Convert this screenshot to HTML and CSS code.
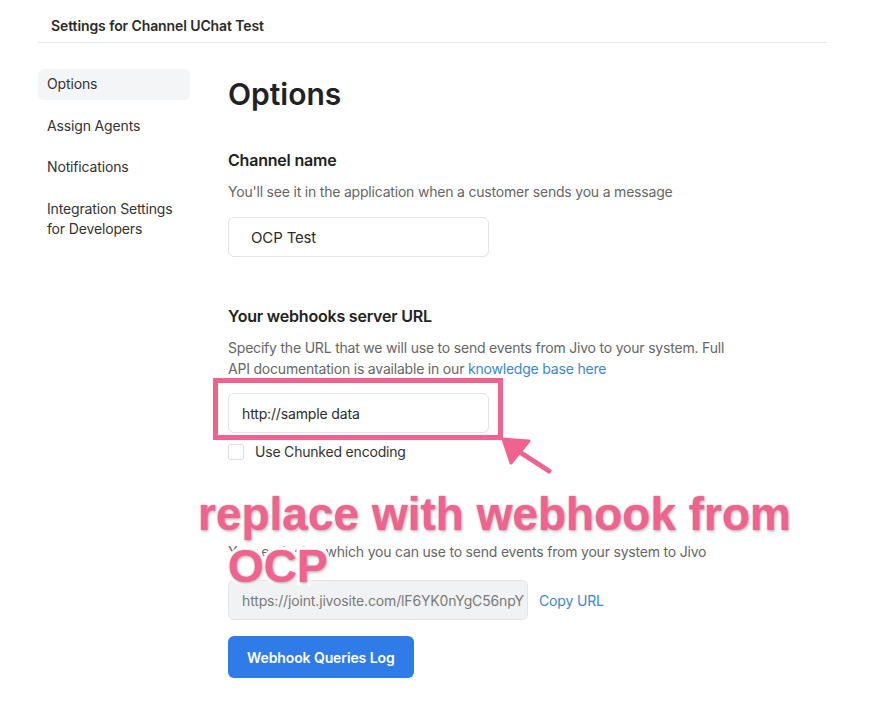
FILE: index.html
```html
<!DOCTYPE html>
<html lang="en">
<head>
    <meta charset="UTF-8" />
    <title>Settings for Channel UChat Test</title>
    <link rel="stylesheet" href="styles.css">
</head>
<body>
    <div class="page">
        <div class="header">Settings for Channel UChat Test</div>

        <div class="layout">
            <ul class="side-nav">
                <li class="active">Options</li>
                <li>Assign Agents</li>
                <li>Notifications</li>
                <li>Integration Settings<br>for Developers</li>
            </ul>

            <div class="main">
                <h1>Options</h1>

                <h2>Channel name</h2>
                <p class="hint">You'll see it in the application when a customer sends you a message</p>
                <input type="text" class="field name-field" value="OCP Test" />

                <h2 class="section">Your webhooks server URL</h2>
                <p class="hint wide">Specify the URL that we will use to send events from Jivo to your system. Full API documentation is available in our <a href="#">knowledge base here</a></p>
                <input type="text" class="field url-field" value="http://sample data" />
                <label class="check"><span class="box"></span>Use Chunked encoding</label>

                <p class="hint endpoint">Your endpoint, which you can use to send events from your system to Jivo</p>
                <div class="copy-row">
                    <input type="text" class="field readonly" value="https://joint.jivosite.com/lF6YK0nYgC56npY" disabled />
                    <a href="#">Copy URL</a>
                </div>
                <button class="btn">Webhook Queries Log</button>
            </div>
        </div>

        <!-- annotation drawn over the screenshot -->
        <div class="mark-box"></div>
        <svg class="mark-arrow" width="70" height="50" viewBox="0 0 70 50">
            <line x1="48" y1="34" x2="14" y2="12" stroke="#f2628f" stroke-width="5" stroke-linecap="round" />
            <polygon points="2,2 28,4 10,26" fill="#f2628f" stroke="#f2628f" stroke-width="3" stroke-linejoin="round" />
        </svg>
        <div class="mark-text">
            <span>replace with webhook from</span>
            <span class="second">OCP</span>
        </div>
    </div>
</body>
</html>
```

FILE: styles.css
```css
body { margin: 0; font-family: Inter, "Noto Sans", sans-serif; color: #2b2b2b; background: white; }
.page { position: relative; width: 789px; margin-left: 38px; }
.header { font-size: 14px; font-weight: 600; line-height: 20px; padding: 16px 13px 6px; border-bottom: 1px solid #e6e6e6; letter-spacing: -0.1px; }
.layout { display: flex; gap: 38px; }
.side-nav { list-style: none; margin: 26px 0 0; padding: 0; width: 152px; display: flex; flex-direction: column; gap: 11px; }
.side-nav li { font-size: 14px; line-height: 20.5px; padding: 5px 9px; border-radius: 6px; color: #333; letter-spacing: -0.15px; }
.side-nav li.active { background: #f4f5f7; }
.main { padding-top: 33px; flex: 1; }
h1 { margin: 0; font-size: 30px; line-height: 36px; font-weight: 600; color: #222; }
h2 { margin: 37px 0 0; font-size: 16px; line-height: 22px; font-weight: 600; color: #222; letter-spacing: -0.2px; }
h2.section { margin-top: 48px; }
.hint { margin: 10px 0 0; font-size: 14px; line-height: 21px; color: #666; letter-spacing: -0.2px; }
.hint.wide { width: 515px; }
.hint a, .copy-row a { color: #3a87d6; text-decoration: none; }
.field { display: block; box-sizing: border-box; height: 40px; border: 1px solid #e4e4e4; border-radius: 6px; font-family: inherit; color: #2b2b2b; background: white; outline: none; letter-spacing: -0.15px; }
.name-field { width: 261px; margin-top: 15px; padding-left: 22px; font-size: 15px; }
.url-field { width: 261px; margin-top: 14px; padding-left: 13px; font-size: 14px; }
.check { display: flex; align-items: center; gap: 11px; margin-top: 11px; font-size: 14px; line-height: 16px; color: #333; letter-spacing: -0.2px; }
.box { width: 14px; height: 14px; border: 1px solid #ddd; border-radius: 3px; }
.hint.endpoint { margin-top: 81px; }
.copy-row { display: flex; align-items: center; gap: 11px; margin-top: 18px; }
.copy-row a { font-size: 14px; letter-spacing: -0.15px; }
.readonly { width: 300px; padding-left: 13px; font-size: 14px; background: #f1f2f4; color: #7a7a7a; }
.btn { display: block; margin-top: 16px; height: 42px; padding: 0 19px; border: none; border-radius: 6px; background: #2f7ce8; color: white; font-family: inherit; font-size: 14px; font-weight: 600; letter-spacing: -0.1px; }
.mark-box { position: absolute; left: 175px; top: 378px; width: 280px; height: 52px; border: 5px solid #f2628f; }
.mark-arrow { position: absolute; left: 463px; top: 437px; }
.mark-text { position: absolute; left: 160px; top: 488px; font-family: "Liberation Sans", Arial, sans-serif; font-weight: bold; font-size: 46px; line-height: 52px; color: #f2628f; -webkit-text-stroke: 7px white; paint-order: stroke fill; text-shadow: 0 0 2px rgba(0,0,0,0.3), 1px 2px 3px rgba(0,0,0,0.2); white-space: nowrap; }
.mark-text span { display: block; }
.mark-text .second { padding-left: 30px; }
```
